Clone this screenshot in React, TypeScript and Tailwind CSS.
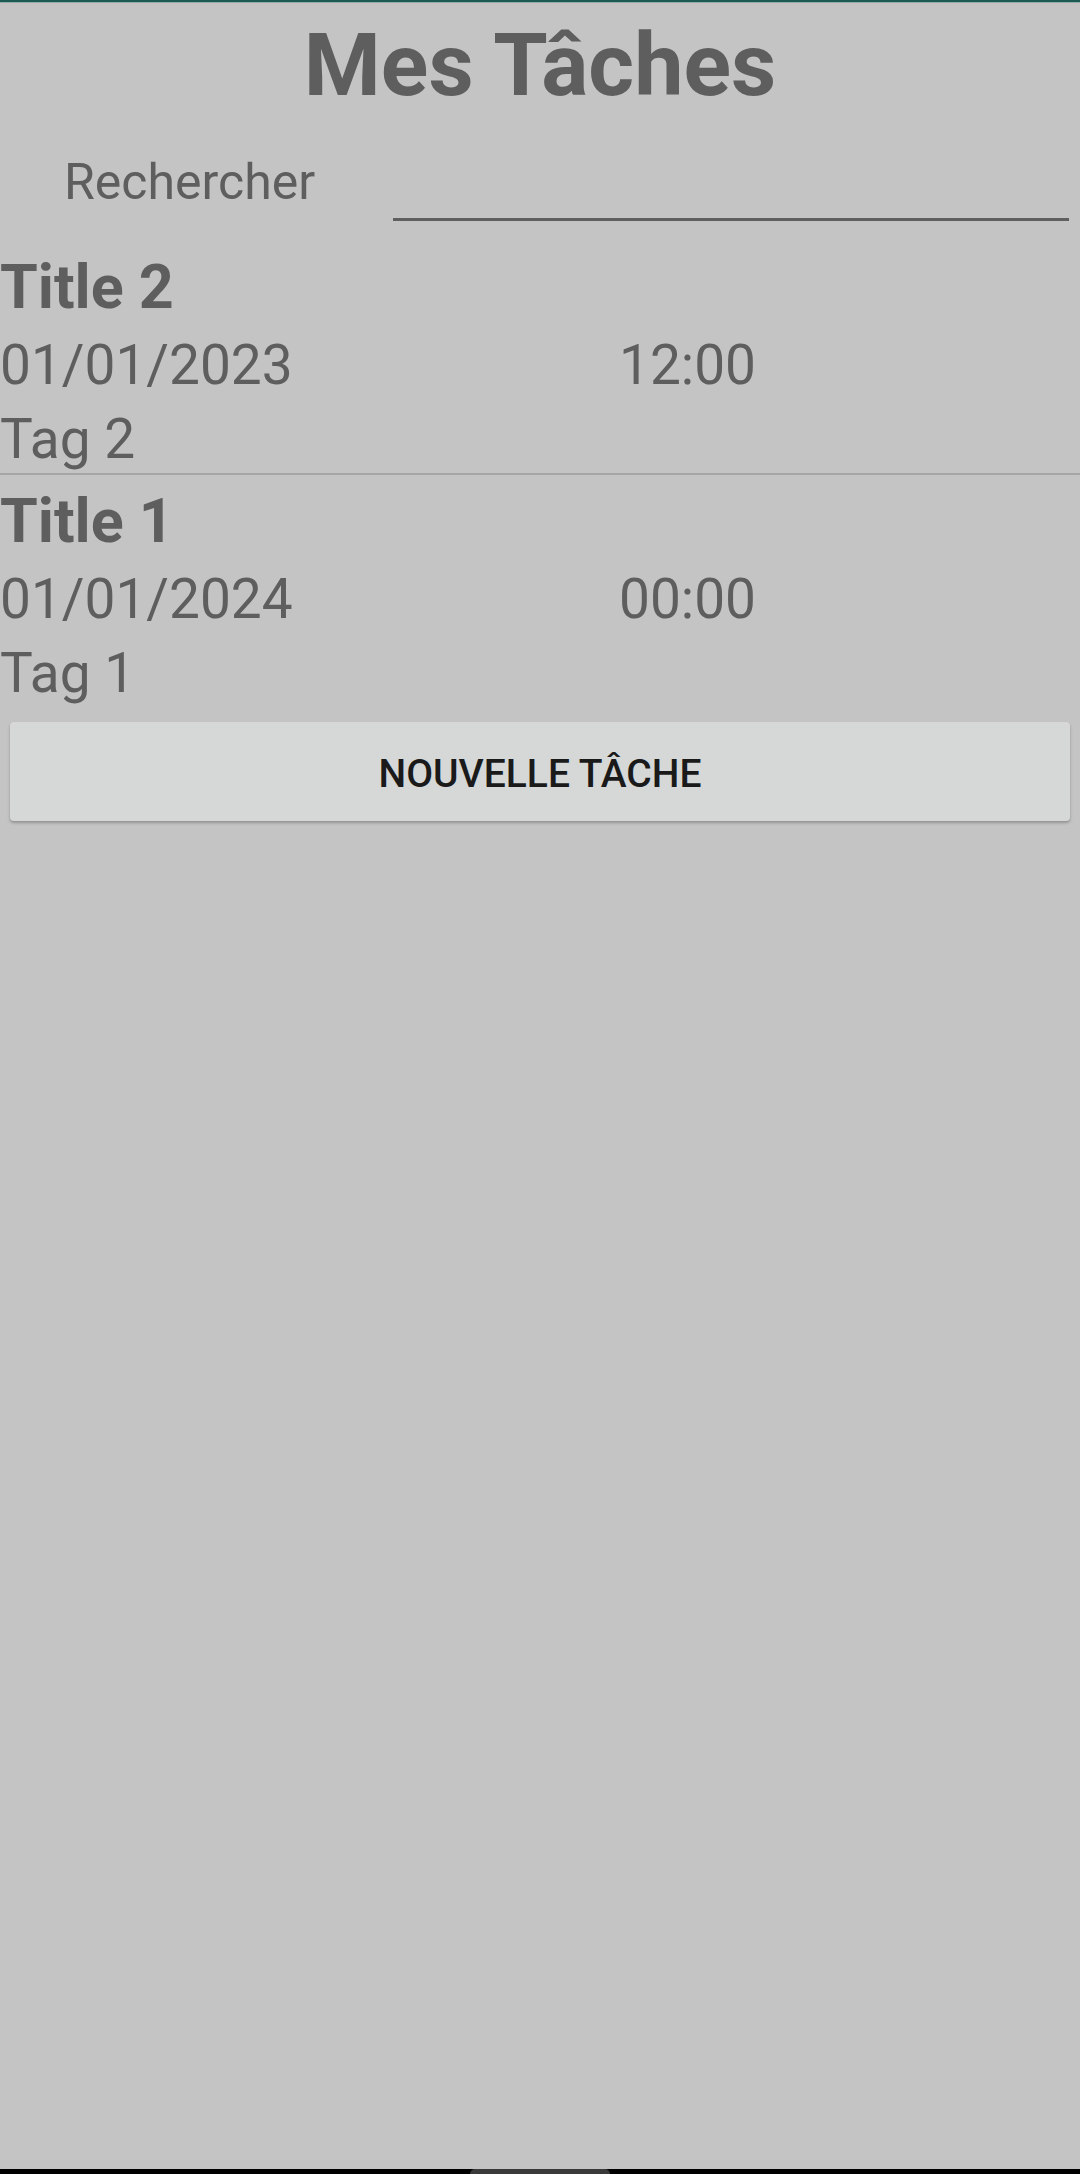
import React from 'react';

interface Task {
  title: string;
  date: string;
  time: string;
  tag: string;
}

const TASKS: Task[] = [
  { title: 'Title 2', date: '01/01/2023', time: '12:00', tag: 'Tag 2' },
  { title: 'Title 1', date: '01/01/2024', time: '00:00', tag: 'Tag 1' },
];

const TaskRow: React.FC<{ task: Task; last: boolean }> = ({ task, last }) => (
  <div className={last ? 'pt-[9px]' : 'pt-[9px] border-b-2 border-[#a6a6a6]'}>
    <div className="text-[61px] font-bold leading-[75px] text-[#5e5e5e]">{task.title}</div>
    <div className="flex text-[55px] leading-[80px] text-[#5e5e5e]">
      <span className="w-[619px] shrink-0">{task.date}</span>
      <span>{task.time}</span>
    </div>
    <div className="text-[55px] leading-[68px] text-[#5e5e5e]">{task.tag}</div>
  </div>
);

export default function App() {
  return (
    <div
      className="relative w-[1080px] h-[2174px] bg-[#c4c4c4] flex flex-col overflow-hidden"
      style={{ fontFamily: 'Roboto, "Noto Sans", sans-serif' }}
    >
      <div className="h-[2px] bg-[#1d5a51]" />
      <div className="h-px bg-[#8fb0aa]" />
      <div className="h-px bg-[#cbbcbf]" />

      <h1 className="text-center text-[88px] font-bold leading-[122px] text-[#5e5e5e]">Mes Tâches</h1>

      <div className="flex h-[95px]">
        <span className="pl-[64px] mt-[26px] text-[50px] leading-[60px] text-[#5e5e5e] w-[393px] shrink-0">
          Rechercher
        </span>
        <div className="flex-1 mr-[11px] border-b-[3px] border-[#5f5f5f]" />
      </div>

      <div className="mt-[20px]">
        {TASKS.map((t, i) => (
          <TaskRow key={t.title} task={t} last={i === TASKS.length - 1} />
        ))}
      </div>

      <button className="mt-[15px] mx-[10px] h-[99px] pt-[5px] rounded-[4px] bg-[#d6d8d8] shadow-[0_2px_3px_rgba(0,0,0,0.25)] text-[39px] font-medium text-[#1a1a1a]">
        NOUVELLE TÂCHE
      </button>

      <div className="absolute bottom-0 left-0 right-0 h-[5px] bg-black flex justify-center">
        <div className="w-[140px] h-[5px] rounded-t-full bg-[#3a3a3a]" />
      </div>
    </div>
  );
}
